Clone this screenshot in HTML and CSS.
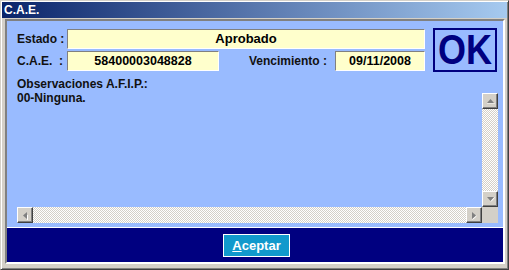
FILE: index.html
```html
<!DOCTYPE html>
<html lang="es">
<head>
    <meta charset="UTF-8">
    <title>C.A.E.</title>
    <link rel="stylesheet" href="styles.css">
</head>
<body>

    <div class="window">
        <div class="titlebar">C.A.E.</div>

        <div class="client">
            <div class="main">
                <div class="header">
                    <div class="fields">
                        <div class="row">
                            <span class="label">Estado :</span>
                            <span class="field field-wide">Aprobado</span>
                        </div>
                        <div class="row">
                            <span class="label">C.A.E.&nbsp;&nbsp;:</span>
                            <span class="field field-cae">58400003048828</span>
                            <span class="label label-venc">Vencimiento :</span>
                            <span class="field field-date">09/11/2008</span>
                        </div>
                    </div>
                    <div class="ok-badge"><span>OK</span></div>
                </div>

                <div class="obs-label">Observaciones A.F.I.P.:</div>

                <div class="memo">
                    <div class="memo-text">00-Ninguna.</div>

                    <div class="vscroll">
                        <div class="sb-btn">
                            <svg width="9" height="6" viewBox="0 0 9 6"><path d="M1 5 L4.5 1 L8 5 Z" fill="#808080"/><path d="M1 6 H9" stroke="#fff" stroke-width="1"/></svg>
                        </div>
                        <div class="sb-track"></div>
                        <div class="sb-btn">
                            <svg width="9" height="6" viewBox="0 0 9 6"><path d="M1 1 L8 1 L4.5 5 Z" fill="#808080"/><path d="M5 5.5 L8.5 1.5" stroke="#fff" stroke-width="1"/></svg>
                        </div>
                    </div>

                    <div class="hscroll">
                        <div class="sb-btn">
                            <svg width="6" height="9" viewBox="0 0 6 9"><path d="M5 1 L1 4.5 L5 8 Z" fill="#808080"/><path d="M5.5 4 V9" stroke="#fff" stroke-width="1"/></svg>
                        </div>
                        <div class="sb-track"></div>
                        <div class="sb-btn">
                            <svg width="6" height="9" viewBox="0 0 6 9"><path d="M1 1 L5 4.5 L1 8 Z" fill="#808080"/><path d="M1.5 8.5 L5.5 5" stroke="#fff" stroke-width="1"/></svg>
                        </div>
                    </div>

                    <div class="corner"></div>
                </div>
            </div>

            <div class="footer">
                <button class="btn"><u>A</u>ceptar</button>
            </div>
        </div>
    </div>

</body>
</html>
```

FILE: styles.css
```css
body {
    margin: 0;
    width: 509px;
    height: 270px;
    overflow: hidden;
    font-family: "Liberation Sans", Arial, sans-serif;
    background: #d4d0c8;
}

.window {
    width: 509px;
    height: 270px;
    box-sizing: border-box;
    display: flex;
    flex-direction: column;
    padding: 1px;
    border: 1px solid;
    border-color: #d4d0c8 #404040 #404040 #d4d0c8;
    box-shadow: inset 1px 1px #fff, inset -1px -1px #808080;
    background: #d4d0c8;
}

.titlebar {
    height: 16px;
    line-height: 16px;
    padding-left: 2px;
    color: white;
    font-size: 12px;
    font-weight: bold;
    background: linear-gradient(to right, #0a246a, #a6caf0);
}

.client {
    flex: 1;
    display: flex;
    flex-direction: column;
    margin: 1px 2px 4px 3px;
    border: 2px solid;
    border-color: #808080 #fff #fff #808080;
}

.main {
    flex: 1;
    display: flex;
    flex-direction: column;
    padding: 7px 5px 4px 10px;
    background: #99bbff;
}

.header {
    display: flex;
}

.fields {
    width: 408px;
    margin-top: 1px;
    display: flex;
    flex-direction: column;
    gap: 2px;
}

.row {
    display: flex;
    align-items: center;
    height: 20px;
}

.label {
    width: 50px;
    font-size: 12px;
    font-weight: bold;
    color: #111;
}

.label-venc {
    width: 86px;
    margin-left: 30px;
}

.field {
    height: 20px;
    box-sizing: border-box;
    line-height: 18px;
    text-align: center;
    font-size: 13px;
    font-weight: bold;
    color: #000;
    background: #ffffcc;
    border: 1px solid;
    border-color: #808080 #fff #fff #808080;
}

.field-wide { flex: 1; }
.field-cae { width: 152px; font-size: 12.5px; }
.field-date { width: 90px; font-size: 12.5px; }

.ok-badge {
    width: 64px;
    height: 44px;
    margin-left: 8px;
    box-sizing: border-box;
    border: 2px solid #000080;
    display: flex;
    justify-content: center;
    align-items: center;
    color: #000080;
    font-size: 36px;
    font-weight: bold;
}

.ok-badge span {
    transform: scaleY(1.2);
}

.obs-label {
    margin-top: 5px;
    line-height: 14px;
    font-size: 12px;
    font-weight: bold;
    color: #111;
}

.memo {
    flex: 1;
    display: grid;
    grid-template-columns: 1fr 16px;
    grid-template-rows: 1fr 16px;
}

.memo-text {
    line-height: 14px;
    font-size: 12px;
    font-weight: bold;
    color: #111;
}

.vscroll {
    margin-top: 2px;
    display: flex;
    flex-direction: column;
}

.hscroll {
    display: flex;
}

.sb-track {
    flex: 1;
    background: repeating-conic-gradient(#fff 0 25%, #d4d0c8 0 50%) 0 0 / 2px 2px;
}

.sb-btn {
    width: 16px;
    height: 16px;
    box-sizing: border-box;
    display: flex;
    justify-content: center;
    align-items: center;
    background: #d4d0c8;
    border: 1px solid;
    border-color: #fff #404040 #404040 #fff;
    box-shadow: inset -1px -1px #808080;
}

.corner {
    background: #d4d0c8;
}

.footer {
    height: 34px;
    border-top: 1px solid #fff;
    background: #000080;
    display: flex;
    justify-content: center;
    align-items: center;
}

.btn {
    width: 67px;
    height: 23px;
    margin-left: 3px;
    padding: 0;
    border: 1px solid #fff;
    background: #1199cc;
    color: white;
    font-family: "Liberation Sans", Arial, sans-serif;
    font-size: 13px;
    font-weight: bold;
}
```
